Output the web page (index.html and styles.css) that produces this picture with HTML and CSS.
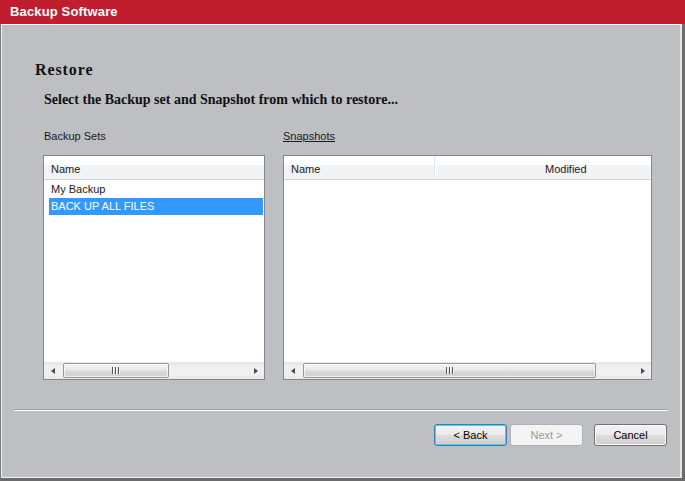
FILE: index.html
```html
<!DOCTYPE html>
<html>
<head>
<meta charset="utf-8">
<title>Backup Software</title>
<link rel="stylesheet" href="styles.css">
</head>
<body>
<div class="window">
  <div class="titlebar">Backup Software</div>
  <div class="frame">
    <div class="client">
      <h1 class="heading">Restore</h1>
      <p class="subtitle">Select the Backup set and Snapshot from which to restore...</p>
      <div class="panels">
        <div class="panel panel-sets">
          <div class="label">Backup Sets</div>
          <div class="listbox">
            <div class="lv-header">
              <div class="col col-name">Name</div>
            </div>
            <div class="lv-rows">
              <div class="row">My Backup</div>
              <div class="row selected">BACK UP ALL FILES</div>
            </div>
            <div class="hscroll">
              <div class="arrow-btn"><span class="tri tri-left"></span></div>
              <div class="track">
                <div class="thumb thumb-sets"><span class="grip"><i></i><i></i><i></i></span></div>
              </div>
              <div class="arrow-btn"><span class="tri tri-right"></span></div>
            </div>
          </div>
        </div>
        <div class="panel panel-snaps">
          <div class="label"><u>S</u><span class="ul">napshots</span></div>
          <div class="listbox">
            <div class="lv-header">
              <div class="col col-snapname">Name</div>
              <div class="col col-modified">Modified</div>
            </div>
            <div class="lv-rows"></div>
            <div class="hscroll">
              <div class="arrow-btn"><span class="tri tri-left"></span></div>
              <div class="track">
                <div class="thumb thumb-snaps"><span class="grip"><i></i><i></i><i></i></span></div>
              </div>
              <div class="arrow-btn"><span class="tri tri-right"></span></div>
            </div>
          </div>
        </div>
      </div>
      <div class="separator"></div>
      <div class="buttons">
        <button class="btn btn-focus">&lt; Back</button>
        <button class="btn btn-disabled">Next &gt;</button>
        <button class="btn btn-cancel">Cancel</button>
      </div>
    </div>
  </div>
</div>
</body>
</html>
```

FILE: styles.css
```css
* { box-sizing: border-box; }

html, body {
  margin: 0;
  padding: 0;
  background: #bebfc2;
}

body {
  font-family: "Liberation Sans", Arial, sans-serif;
  font-size: 11px;
  color: #000;
}

.window {
  width: 685px;
  height: 481px;
  display: flex;
  flex-direction: column;
  overflow: hidden;
}

.titlebar {
  height: 24px;
  flex: none;
  background: #c01e2e;
  color: #fff;
  font-weight: bold;
  font-size: 13px;
  letter-spacing: 0.15px;
  line-height: 24px;
  padding-left: 10px;
}

.frame {
  flex: 1;
  display: flex;
  border-left: 1px solid #7a7a7a;
  border-right: 3px solid #6b6b6b;
  border-bottom: 3px solid #6b6b6b;
}

.client {
  flex: 1;
  display: flex;
  flex-direction: column;
  background: #bebfc2;
  border-top: 1px solid #ffffff;
  border-left: 1px solid #f2f2f2;
  border-right: 2px solid #e6e6e7;
  border-bottom: 1px solid #f2f2f2;
}

.heading {
  margin: 36px 0 0 33px;
  font-family: "Liberation Serif", "Times New Roman", serif;
  font-weight: bold;
  font-size: 16px;
  letter-spacing: 0.9px;
  line-height: 18px;
  color: #111;
}

.subtitle {
  margin: 12px 0 0 42px;
  font-family: "Liberation Serif", "Times New Roman", serif;
  font-weight: bold;
  font-size: 14px;
  line-height: 17px;
  color: #111;
}

.panels {
  display: flex;
  gap: 18px;
  margin: 22px 0 0 41px;
}

.panel {
  display: flex;
  flex-direction: column;
}

.panel-sets { width: 222px; }
.panel-snaps { width: 369px; }

.label {
  line-height: 13px;
  height: 13px;
  margin-bottom: 12px;
  color: #1a1a1a;
}

.panel-sets .label { padding-left: 1px; }

.label u, .label .ul { text-decoration: underline; }

.listbox {
  height: 225px;
  border: 1px solid #82878f;
  background: #fff;
  display: flex;
  flex-direction: column;
}

.lv-header {
  height: 24px;
  flex: none;
  display: flex;
  border-bottom: 1px solid #d5d5d5;
  background: linear-gradient(#ffffff 0%, #ffffff 40%, #f3f4f6 40%, #f1f2f4 100%);
}

.col {
  padding-top: 7px;
  line-height: 13px;
  color: #1a1a1a;
}

.col-name { padding-left: 7px; }

.col-snapname {
  width: 151px;
  padding-left: 7px;
  border-right: 1px solid #e3e5e8;
  box-shadow: 1px 0 0 #ffffff;
}

.col-modified { padding-left: 110px; }

.lv-rows {
  flex: 1;
  padding-top: 1px;
}

.row {
  height: 17px;
  line-height: 17px;
  margin: 0 1px 0 5px;
  padding-left: 2px;
  color: #1a1a1a;
}

.row.selected {
  background: #3399ff;
  color: #fff;
}

.hscroll {
  height: 17px;
  flex: none;
  display: flex;
  background: linear-gradient(#e5e5e5, #f0f0f0 30%, #f0f0f0 70%, #e8e8e8);
}

.arrow-btn {
  width: 17px;
  flex: none;
  display: flex;
  align-items: center;
  justify-content: center;
}

.tri {
  width: 0;
  height: 0;
  border-top: 3.5px solid transparent;
  border-bottom: 3.5px solid transparent;
}

.tri-left { border-right: 4px solid #4a4a4a; margin-left: 1px; }
.tri-right { border-left: 4px solid #4a4a4a; margin-left: 0; }

.track {
  flex: 1;
  padding: 1px 0 1px 2px;
}

.thumb {
  height: 15px;
  border: 1px solid #979797;
  border-radius: 2px;
  background: linear-gradient(#f3f3f3 0%, #e9e9e9 45%, #d9d9d9 55%, #d2d2d2 100%);
  box-shadow: inset 0 0 0 1px rgba(255,255,255,0.6);
  display: flex;
  align-items: center;
  justify-content: center;
}

.thumb-sets { width: 106px; }
.thumb-snaps { width: 293px; }

.grip {
  display: flex;
  gap: 1px;
  height: 7px;
}

.grip i {
  display: block;
  width: 2px;
  height: 7px;
  background: linear-gradient(90deg, #555 50%, #f4f4f4 50%);
}

.separator {
  margin: 29px 12px 0 12px;
  height: 2px;
  border-top: 1px solid #a0a0a0;
  border-bottom: 1px solid #ffffff;
}

.buttons {
  display: flex;
  justify-content: flex-end;
  margin: 13px 13px 0 0;
}

.btn {
  width: 73px;
  height: 22px;
  padding: 0;
  font-family: "Liberation Sans", Arial, sans-serif;
  font-size: 11px;
  color: #000;
  border: 1px solid #707070;
  border-radius: 3px;
  background: linear-gradient(#f2f2f2 0%, #ebebeb 50%, #dddddd 50%, #cfcfcf 100%);
  box-shadow: inset 0 0 0 1px #fcfcfc;
}

.btn-focus {
  border-color: #3c7fb1;
  box-shadow: inset 0 0 0 1px #48cff5;
}

.btn-disabled {
  margin-left: 3px;
  border-color: #adb2b5;
  background: #f4f4f4;
  color: #9a9a9a;
  box-shadow: none;
}

.btn-cancel {
  margin-left: 11px;
}
```
